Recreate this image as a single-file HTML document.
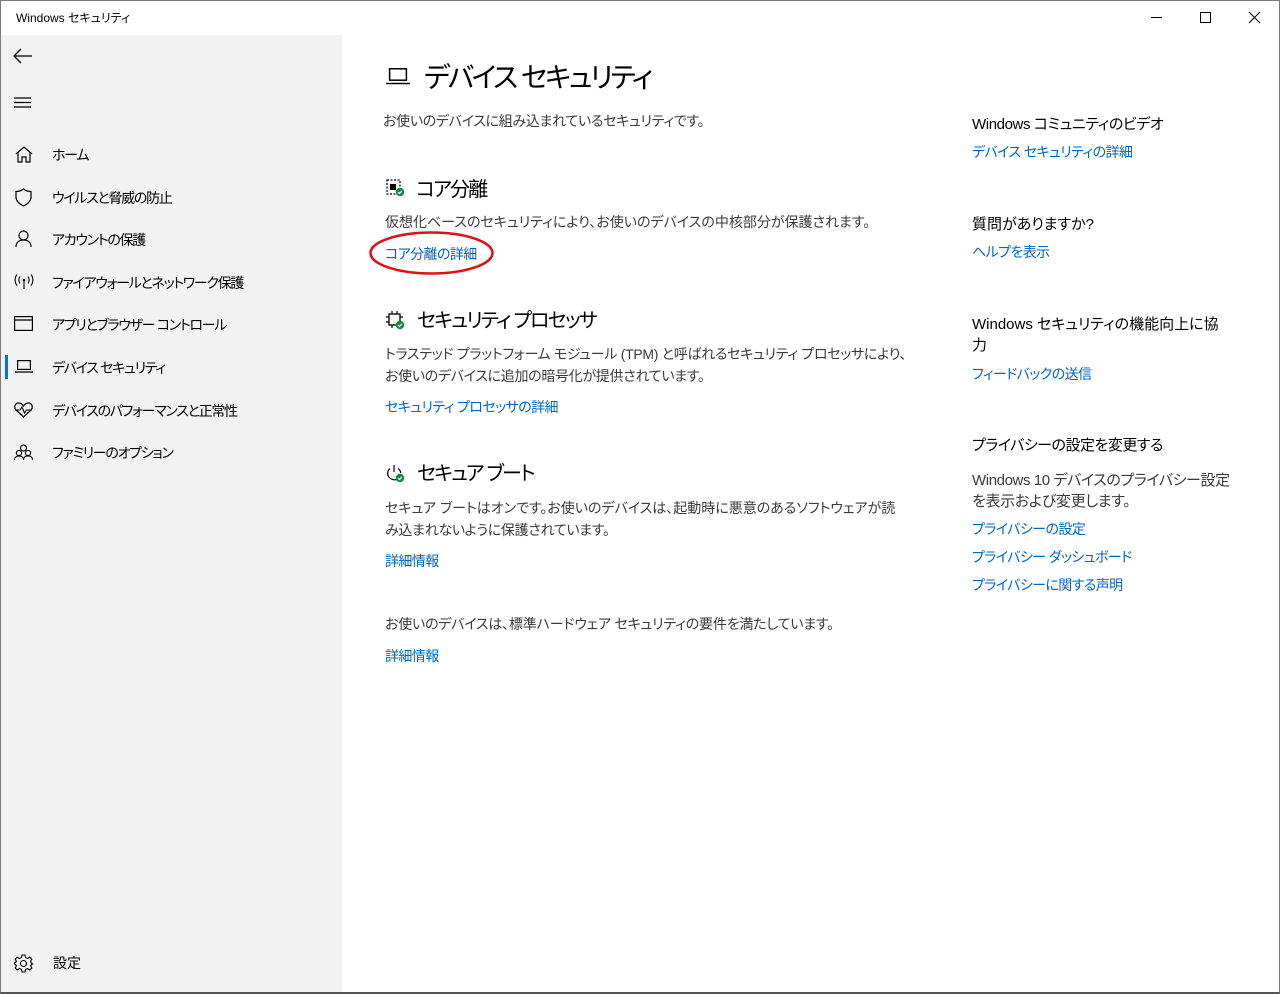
<!DOCTYPE html>
<html><head><meta charset="utf-8"><style>
*{margin:0;padding:0;box-sizing:border-box}
html,body{width:1280px;height:994px;overflow:hidden;background:#fff}
body{position:relative;font-family:"Liberation Sans","Noto Sans CJK JP",sans-serif;color:#000;font-feature-settings:"palt"}
.frame{position:absolute;left:0;top:0;width:1280px;height:994px;border:1px solid #7a7a7a;border-bottom:2px solid #555}
.side{position:absolute;left:1px;top:35px;width:341px;height:957px;background:#f2f2f2}
.t{position:absolute;white-space:nowrap;line-height:21px}
.n{font-size:14px;color:#000}
.nv{letter-spacing:-1.3px}
.d{font-size:14px;color:#3a3a3a;letter-spacing:-0.3px}
.l{font-size:14px;color:#0067c0;letter-spacing:-0.6px}
.h{font-size:20px;line-height:28px;letter-spacing:-1.8px}
svg{position:absolute;overflow:visible}
</style></head><body>
<div class="frame"></div>
<div class="side"></div>
<div class="t" style="left:16px;top:9px;font-size:12px;line-height:18px">Windows セキュリティ</div>
<svg style="left:1151px;top:17px" width="12" height="2"><line x1="0" y1="0.5" x2="11" y2="0.5" stroke="#000"/></svg>
<svg style="left:1200px;top:12px" width="11" height="11"><rect x="0.5" y="0.5" width="10" height="10" fill="none" stroke="#000"/></svg>
<svg style="left:1249px;top:12px" width="11" height="11"><path d="M0 0L11 11M11 0L0 11" stroke="#000"/></svg>
<svg style="left:13px;top:48px" width="20" height="16"><path d="M1 8H19M8 1L1 8L8 15" fill="none" stroke="#000" stroke-width="1.3"/></svg>
<svg style="left:14px;top:97px" width="18" height="12"><path d="M0 1H17M0 5.5H17M0 10H17" stroke="#000" stroke-width="1.2"/></svg>
<svg style="left:15px;top:146px" width="18" height="17"><path d="M1 8L9 1L17 8M3 6.5V16H7V11H11V16H15V6.5" fill="none" stroke="#000" stroke-width="1.2"/></svg>
<svg style="left:15px;top:188px" width="17" height="19"><path d="M8.5 1C6 3 3.5 3.5 1 3.5V9C1 13 4.5 16 8.5 18C12.5 16 16 13 16 9V3.5C13.5 3.5 11 3 8.5 1Z" fill="none" stroke="#000" stroke-width="1.2"/></svg>
<svg style="left:15px;top:230px" width="17" height="18"><circle cx="8.5" cy="5.5" r="4.5" fill="none" stroke="#000" stroke-width="1.2"/><path d="M1 17C1 12.5 4 10 8.5 10S16 12.5 16 17" fill="none" stroke="#000" stroke-width="1.2"/></svg>
<svg style="left:14px;top:274px" width="20" height="16"><circle cx="10" cy="6" r="1.3"/><path d="M10 6V15M6 2.5C4.5 4.5 4.5 7.5 6 9.5M14 2.5C15.5 4.5 15.5 7.5 14 9.5M3 0.5C0.5 3.5 0.5 8.5 3 11.5M17 0.5C19.5 3.5 19.5 8.5 17 11.5" fill="none" stroke="#000" stroke-width="1.1"/></svg>
<svg style="left:14px;top:316px" width="19" height="15"><rect x="0.6" y="0.6" width="17.8" height="13.8" fill="none" stroke="#000" stroke-width="1.2"/><line x1="0.6" y1="4" x2="18.4" y2="4" stroke="#000" stroke-width="1.2"/></svg>
<div style="position:absolute;left:5px;top:355px;width:3px;height:24px;background:#0078d7"></div>
<svg style="left:15px;top:360px" width="18" height="13"><rect x="2.6" y="0.6" width="12.8" height="8.8" fill="none" stroke="#000" stroke-width="1.2"/><line x1="0" y1="12" x2="18" y2="12" stroke="#000" stroke-width="1.2"/></svg>
<svg style="left:14px;top:402px" width="19" height="16"><path d="M9.5 15L2 8C-0.5 5 1 1 4.8 1C7 1 8.5 2.5 9.5 4C10.5 2.5 12 1 14.2 1C18 1 19.5 5 17 8Z" fill="none" stroke="#000" stroke-width="1.2"/><path d="M1 8H6L8 5L10.5 11L12.5 8H18" fill="none" stroke="#000" stroke-width="1.1"/></svg>
<svg style="left:14px;top:444px" width="19" height="17"><circle cx="9.5" cy="4" r="3" fill="none" stroke="#000" stroke-width="1.1"/><circle cx="5" cy="9" r="2.6" fill="none" stroke="#000" stroke-width="1.1"/><circle cx="14" cy="9" r="2.6" fill="none" stroke="#000" stroke-width="1.1"/><path d="M0.5 16C0.5 13 2.5 12 5 12S9.5 13 9.5 16M9.5 16C9.5 13 11.5 12 14 12S18.5 13 18.5 16" fill="none" stroke="#000" stroke-width="1.1"/></svg>
<svg style="left:14px;top:954px" width="19" height="19"><circle cx="9.5" cy="9.5" r="3" fill="none" stroke="#000" stroke-width="1.1"/><path d="M8 1H11L11.5 3.5L13.5 4.5L15.8 3.2L17.8 5.2L16.5 7.5L17.5 9.5L18.5 9.5V10L16.5 11.5L17.8 14L15.8 16L13.5 14.5L11.5 15.5L11 18H8L7.5 15.5L5.5 14.5L3.2 16L1.2 14L2.5 11.5L0.5 10V9L2.5 7.5L1.2 5.2L3.2 3.2L5.5 4.5L7.5 3.5Z" fill="none" stroke="#000" stroke-width="1.1"/></svg>
<div class="t n nv" style="left:52px;top:145px">ホーム</div>
<div class="t n nv" style="left:52px;top:188px">ウイルスと脅威の防止</div>
<div class="t n nv" style="left:52px;top:230px">アカウントの保護</div>
<div class="t n nv" style="left:52px;top:273px">ファイアウォールとネットワーク保護</div>
<div class="t n nv" style="left:52px;top:315px">アプリとブラウザー コントロール</div>
<div class="t n nv" style="left:52px;top:358px">デバイス セキュリティ</div>
<div class="t n nv" style="left:52px;top:401px">デバイスのパフォーマンスと正常性</div>
<div class="t n nv" style="left:52px;top:443px">ファミリーのオプション</div>
<div class="t n" style="left:53px;top:953px">設定</div>
<svg style="left:386px;top:68px" width="24" height="17"><rect x="3.6" y="0.8" width="16.8" height="11.4" fill="none" stroke="#000" stroke-width="1.5"/><line x1="0" y1="15.5" x2="24" y2="15.5" stroke="#000" stroke-width="1.5"/></svg>
<div class="t" style="left:424px;top:58px;font-size:28px;line-height:40px;letter-spacing:-2.5px">デバイス セキュリティ</div>
<div class="t d" style="left:383px;top:111px">お使いのデバイスに組み込まれているセキュリティです。</div>
<svg style="left:386px;top:179px" width="19" height="18"><rect x="1" y="1" width="13" height="14" fill="none" stroke="#000" stroke-width="1.2" stroke-dasharray="2 1.5"/><rect x="4" y="5" width="6" height="6" fill="#000"/><circle cx="14" cy="13" r="4.2" fill="#10893e"/><path d="M12 13L13.5 14.5L16 11.8" fill="none" stroke="#fff" stroke-width="1.2"/></svg>
<div class="t h" style="left:416px;top:176px">コア分離</div>
<div class="t d" style="left:385px;top:212px;letter-spacing:0">仮想化ベースのセキュリティにより、お使いのデバイスの中核部分が保護されます。</div>
<div class="t l" style="left:385px;top:244px">コア分離の詳細</div>
<svg style="left:369px;top:231px" width="126" height="45"><ellipse cx="62.5" cy="22" rx="61" ry="20.5" fill="none" stroke="#e01010" stroke-width="2.5"/></svg>
<svg style="left:386px;top:311px" width="19" height="19"><rect x="3" y="3" width="11" height="11" fill="none" stroke="#000" stroke-width="1.3"/><path d="M6 0V3M11 0V3M6 14V17M0 6H3M0 11H3M14 6H17" stroke="#000" stroke-width="1.2"/><circle cx="14" cy="14" r="4.2" fill="#10893e"/><path d="M12 14L13.5 15.5L16 12.8" fill="none" stroke="#fff" stroke-width="1.2"/></svg>
<div class="t h" style="left:417px;top:307px">セキュリティ プロセッサ</div>
<div class="t d" style="left:385px;top:344px">トラステッド プラットフォーム モジュール (TPM) と呼ばれるセキュリティ プロセッサにより、</div>
<div class="t d" style="left:385px;top:366px">お使いのデバイスに追加の暗号化が提供されています。</div>
<div class="t l" style="left:385px;top:397px">セキュリティ プロセッサの詳細</div>
<svg style="left:386px;top:464px" width="19" height="19"><path d="M4 4.5C1.5 6.5 1 10 2.5 12.5S7.5 16.5 10.5 15.5M12 4.5C13.5 5.5 14.5 7 14.8 9" fill="none" stroke="#000" stroke-width="1.2"/><line x1="8" y1="1" x2="8" y2="8" stroke="#000" stroke-width="1.2"/><circle cx="14" cy="14" r="4.2" fill="#10893e"/><path d="M12 14L13.5 15.5L16 12.8" fill="none" stroke="#fff" stroke-width="1.2"/></svg>
<div class="t h" style="left:417px;top:460px">セキュア ブート</div>
<div class="t d" style="left:385px;top:498px;letter-spacing:0">セキュア ブートはオンです。お使いのデバイスは、起動時に悪意のあるソフトウェアが読</div>
<div class="t d" style="left:385px;top:520px">み込まれないように保護されています。</div>
<div class="t l" style="left:385px;top:551px">詳細情報</div>
<div class="t d" style="left:385px;top:614px;letter-spacing:-0.2px">お使いのデバイスは、標準ハードウェア セキュリティの要件を満たしています。</div>
<div class="t l" style="left:385px;top:646px">詳細情報</div>
<div class="t n" style="left:972px;top:114px;font-size:15px;letter-spacing:-0.4px">Windows コミュニティのビデオ</div>
<div class="t l" style="left:972px;top:142px">デバイス セキュリティの詳細</div>
<div class="t n" style="left:972px;top:214px;font-size:15px">質問がありますか?</div>
<div class="t l" style="left:972px;top:242px">ヘルプを表示</div>
<div class="t n" style="left:972px;top:314px;font-size:15px">Windows セキュリティの機能向上に協</div>
<div class="t n" style="left:972px;top:335px;font-size:15px">力</div>
<div class="t l" style="left:972px;top:364px">フィードバックの送信</div>
<div class="t n" style="left:972px;top:435px;font-size:15px;letter-spacing:-0.5px">プライバシーの設定を変更する</div>
<div class="t d" style="left:972px;top:470px;font-size:15px;letter-spacing:-0.4px">Windows 10 デバイスのプライバシー設定</div>
<div class="t d" style="left:972px;top:491px;font-size:15px">を表示および変更します。</div>
<div class="t l" style="left:972px;top:519px">プライバシーの設定</div>
<div class="t l" style="left:972px;top:547px">プライバシー ダッシュボード</div>
<div class="t l" style="left:972px;top:575px">プライバシーに関する声明</div>
</body></html>
